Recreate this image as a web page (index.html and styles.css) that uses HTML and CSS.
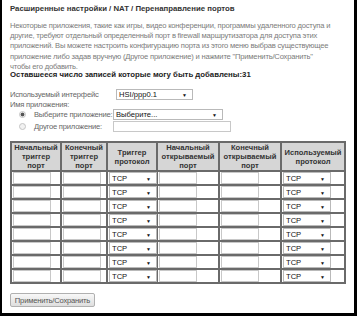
FILE: index.html
```html
<!DOCTYPE html>
<html lang="ru">
<head>
    <meta charset="UTF-8">
    <title>Перенаправление портов</title>
    <link rel="stylesheet" href="styles.css">
</head>
<body>
    <div class="page">
        <h1 class="title">Расширенные настройки / NAT / Перенаправление портов</h1>
        <p class="intro">
            Некоторые приложения, такие как игры, видео конференции, программы удаленного доступа и<br>
            другие, требуют отдельный определенный порт в firewall маршрутизатора для доступа этих<br>
            приложений. Вы можете настроить конфигурацию порта из этого меню выбрав существующее<br>
            приложение либо задав вручную (Другое приложение) и нажмите "Применить/Сохранить"<br>
            чтобы его добавить.
        </p>
        <p class="remain">Оставшееся число записей которые могу быть добавлены:31</p>

        <div class="field iface">
            <span class="label">Используемый интерфейс</span>
            <span class="pick wide"><select><option>HSI/ppp0.1</option></select></span>
        </div>
        <div class="field name">Имя приложения:</div>
        <div class="field app">
            <input type="radio" name="app" checked>
            <span class="label">Выберите приложение:</span>
            <span class="pick app-pick"><select><option>Выберите...</option></select></span>
        </div>
        <div class="field app">
            <input type="radio" name="app">
            <span class="label">Другое приложение:</span>
            <input type="text" class="text app-text">
        </div>

        <table class="ports">
            <colgroup>
                <col style="width:50px"><col style="width:46px"><col style="width:50px">
                <col style="width:62px"><col style="width:62px"><col style="width:64px">
            </colgroup>
            <thead>
                <tr>
                    <th>Начальный<br>триггер<br>порт</th>
                    <th>Конечный<br>триггер<br>порт</th>
                    <th>Триггер<br>протокол</th>
                    <th>Начальный<br>открываемый<br>порт</th>
                    <th>Конечный<br>открываемый<br>порт</th>
                    <th>Используемый<br>протокол</th>
                </tr>
            </thead>
            <tbody id="rows"></tbody>
        </table>

        <button class="save">Применить/Сохранить</button>
    </div>

    <script>
        // 8 empty rule rows
        var body = document.getElementById('rows');
        for (var i = 0; i < 8; i++) {
            var tr = document.createElement('tr');
            tr.innerHTML =
                '<td><input type="text" class="text port"></td>' +
                '<td><input type="text" class="text port"></td>' +
                '<td><span class="pick proto"><select><option>TCP</option></select></span></td>' +
                '<td><input type="text" class="text port"></td>' +
                '<td><input type="text" class="text port"></td>' +
                '<td><span class="pick proto"><select><option>TCP</option></select></span></td>';
            body.appendChild(tr);
        }
    </script>
</body>
</html>
```

FILE: styles.css
```css
body {
    margin: 0;
    background: #fff;
    font-family: "Liberation Sans", Arial, sans-serif;
    font-size: 7.6px;
    letter-spacing: -0.2px;
    color: #555;
}

.page {
    box-sizing: border-box;
    width: 357px;
    height: 316px;
    padding: 4px 0 0 8px;
    border-style: solid;
    border-color: #000;
    border-width: 0 3px 3px 2px;
    overflow: hidden;
}

.title {
    margin: 0 0 7px;
    font-size: 7.8px;
    letter-spacing: 0;
    line-height: 10px;
    font-weight: bold;
    color: #333;
}

.intro {
    margin: 0;
    line-height: 10.2px;
    color: #7b7b7b;
    white-space: nowrap;
}

.remain {
    margin: -2px 0 0;
    font-size: 7.8px;
    letter-spacing: 0;
    line-height: 10px;
    font-weight: bold;
    color: #222;
}

.field {
    display: flex;
    align-items: center;
    color: #666;
    white-space: nowrap;
}

.iface {
    margin-top: 9px;
    height: 11px;
}
.iface .label {
    flex: 0 0 106px;
    min-width: 0;
}

.name {
    height: 9px;
    line-height: 9px;
}

.app {
    height: 11px;
    margin-bottom: 1px;
}
.app .label {
    flex: 0 0 79px;
    min-width: 0;
}

input[type="radio"] {
    appearance: none;
    box-sizing: border-box;
    flex: none;
    width: 7px;
    height: 7px;
    margin: 0 8px 0 9px;
    border: 1px solid #c4c4c4;
    border-radius: 50%;
    background: #f2f2f2;
}
input[type="radio"]:checked {
    background: radial-gradient(circle, #555 0 1.6px, #ececec 2.2px);
}

.pick {
    position: relative;
    display: inline-block;
}
.pick::after {
    content: "\25BC";
    position: absolute;
    top: 3px;
    right: 6px;
    font-size: 5px;
    letter-spacing: 0;
    color: #111;
    pointer-events: none;
}
select {
    appearance: none;
    box-sizing: border-box;
    height: 11px;
    margin: 0;
    padding: 0 0 0 2px;
    border: 1px solid #b9b9b9;
    border-radius: 0;
    background: #fff;
    font-family: "Liberation Sans", Arial, sans-serif;
    font-size: 7.6px;
    line-height: 9px;
    color: #111;
}
.wide select {
    width: 77px;
}
.app-pick select {
    width: 110px;
}

.text {
    box-sizing: border-box;
    height: 11px;
    margin: 0;
    padding: 0 2px;
    border: 1px solid #c8c8c8;
    border-radius: 0;
    background: #fff;
    font-size: 8px;
}
.app-text {
    width: 118px;
}

.ports {
    margin-top: 9px;
    width: 336px;
    table-layout: fixed;
    border-collapse: collapse;
}
.ports th,
.ports td {
    border: 2px solid #6a6a6a;
}
.ports th {
    height: 27px;
    padding: 0;
    background: #d6d6d6;
    font-size: 7.6px;
    letter-spacing: 0;
    line-height: 9px;
    font-weight: bold;
    color: #333;
    text-align: center;
    vertical-align: middle;
}
.ports td {
    height: 12px;
    padding: 0 0 0 1px;
    text-align: left;
}
.port {
    display: block;
    width: 38px;
    height: 12px;
}
.proto {
    display: block;
    width: 48px;
}
.proto select {
    display: block;
    width: 48px;
    height: 12px;
}
.proto::after {
    top: 4px;
    right: 6px;
}

.save {
    display: block;
    margin-top: 9px;
    height: 14px;
    width: 85px;
    padding: 0;
    border: 1px solid #b0b0b0;
    border-radius: 2px;
    background: linear-gradient(#f8f8f8, #dedede);
    font-family: "Liberation Sans", Arial, sans-serif;
    font-size: 7.6px;
    letter-spacing: -0.2px;
    color: #555;
}
```
